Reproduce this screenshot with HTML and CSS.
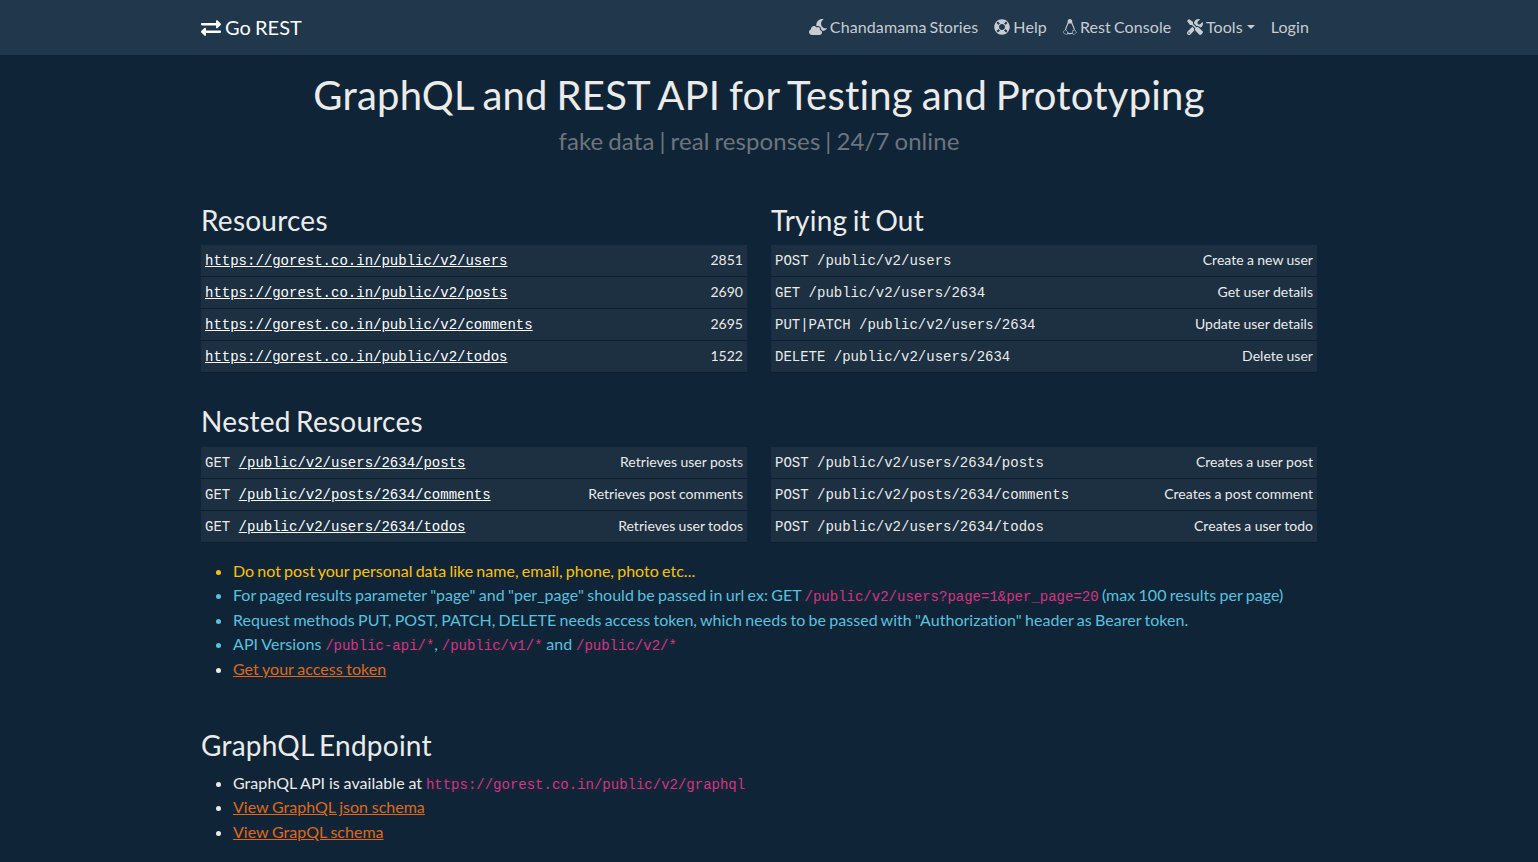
FILE: index.html
```html
<!DOCTYPE html>
<html lang="en">
<head>
<meta charset="utf-8">
<title>Go REST</title>
<link rel="stylesheet" href="styles.css">
</head>
<body>
<nav class="navbar">
  <div class="container navbar-inner">
    <a class="brand" href="#"><svg class="icon" viewBox="0 0 512 512"><path d="M0 168v-16c0-13.255 10.745-24 24-24h360V80c0-21.367 25.899-32.042 40.971-16.971l80 80c9.372 9.373 9.372 24.569 0 33.941l-80 80C409.956 271.982 384 261.456 384 240v-48H24c-13.255 0-24-10.745-24-24zm488 152H128v-48c0-21.314-25.862-32.08-40.971-16.971l-80 80c-9.372 9.373-9.372 24.569 0 33.941l80 80C102.057 463.997 128 453.437 128 432v-48h360c13.255 0 24-10.745 24-24v-16c0-13.255-10.745-24-24-24z"/></svg> Go REST</a>
    <div class="nav">
      <a class="nav-link" href="#"><svg class="icon icon-wide" viewBox="0 0 576 512"><path d="M342.8 352.7c5.7-9.6 9.2-20.7 9.2-32.7 0-35.3-28.7-64-64-64-17.2 0-32.8 6.9-44.3 17.9-16.3-29.6-47.5-49.9-83.7-49.9-53 0-96 43-96 96 0 2 .5 3.8.6 5.7C27.1 338.8 0 374.1 0 416c0 53 43 96 96 96h240c44.2 0 80-35.8 80-80 0-41.9-32.3-75.8-73.2-79.3zm222.5-54.3c-93.1 17.7-178.5-53.7-178.5-147.7 0-54.2 29-104 76.1-130.8 7.3-4.1 5.4-15.1-2.8-16.7C448.4 1.1 436.7 0 425 0 319.1 0 233.1 85.9 233.1 191.9c0 8.5.7 16.8 1.8 25 5.9 4.3 11.6 8.9 16.7 14.2 11.4-4.7 23.7-7.2 36.4-7.2 52.9 0 96 43.1 96 96 0 3.6-.2 7.2-.6 10.7 23.6 10.8 42.4 29.5 53.5 52.6 54.4-3.4 103.7-29.3 137.1-70.4 5.3-6.5-.5-16.1-8.7-14.4z"/></svg> Chandamama Stories</a>
      <a class="nav-link" href="#"><svg class="icon" viewBox="0 0 512 512"><path d="M256 8C119.033 8 8 119.033 8 256s111.033 248 248 248 248-111.033 248-248S392.967 8 256 8zm173.696 119.559l-63.399 63.399c-10.987-18.559-26.67-34.252-45.255-45.255l63.399-63.399a218.396 218.396 0 0 1 45.255 45.255zM256 352c-53.019 0-96-42.981-96-96s42.981-96 96-96 96 42.981 96 96-42.981 96-96 96zM127.559 82.304l63.399 63.399c-18.559 10.987-34.252 26.67-45.255 45.255l-63.399-63.399a218.372 218.372 0 0 1 45.255-45.255zM82.304 384.441l63.399-63.399c10.987 18.559 26.67 34.252 45.255 45.255l-63.399 63.399a218.396 218.396 0 0 1-45.255-45.255zm302.137 45.255l-63.399-63.399c18.559-10.987 34.252-26.67 45.255-45.255l63.399 63.399a218.403 218.403 0 0 1-45.255 45.255z"/></svg> Help</a>
      <a class="nav-link" href="#"><svg class="icon icon-linux" viewBox="0 0 14 16"><path d="M4.600 5V2.700C4.600 1 5.500.1 6.900.1S9.300 1 9.300 2.700V5L8.600 4.400H5.300z"/><path class="tux-side" d="M4.900 4.300C4.700 6 3.200 7.500 2.800 9.600L2.500 11M9 4.300C9.300 6 11 7.700 11.300 10.700M4.400 14.100C5.800 14.700 8 14.700 9.500 13.900"/><path class="tux-line" d="M.6 12.200C1.500 11.900 2.100 10.700 2.900 10.900 3.800 11.300 4.200 12.900 4.900 13.900 4.900 15.800 3.700 15.700 2.700 15 .9 14.600.3 14.500.6 12.200zM10 11C9.700 12.500 9.100 15.200 10.300 15.500 11.500 15.700 11.700 14.500 13.500 13.500 12.500 12.800 13 11.500 11.900 10.900 11 11.900 10.300 11.900 10 11z"/></svg> Rest Console</a>
      <a class="nav-link caret" href="#"><svg class="icon" viewBox="0 0 512 512"><path d="M501.1 395.7L384 278.6c-23.1-23.1-57.6-27.6-85.4-13.9L192 158.1V96L64 0 0 64l96 128h62.1l106.6 106.6c-13.6 27.8-9.2 62.3 13.9 85.4l117.1 117.1c14.6 14.6 38.2 14.6 52.7 0l52.7-52.7c14.5-14.6 14.5-38.2 0-52.7zM331.7 225c28.3 0 54.9 11 74.9 31l19.4 19.4c15.8-6.9 30.8-16.5 43.8-29.5 37.1-37.1 49.7-89.3 37.9-136.7-2.2-9-13.5-12.1-20.1-5.5l-74.4 74.4-67.9-11.3L334 98.9l74.4-74.4c6.6-6.6 3.4-17.9-5.7-20.2-47.4-11.7-99.6.9-136.6 37.9-28.5 28.5-41.9 66.1-41.2 103.6l82.1 82.1c8.1-1.9 16.5-2.9 24.7-2.9zm-103.900 82l-56.700-56.700L18.700 402.800c-25 25-25 65.500 0 90.500s65.500 25 90.500 0l123.600-123.600c-7.600-19.900-9.900-41.600-5-62.700zM64 472c-13.200 0-24-10.800-24-24 0-13.300 10.700-24 24-24s24 10.700 24 24c0 13.200-10.700 24-24 24z"/></svg> Tools</a>
      <a class="nav-link" href="#">Login</a>
    </div>
  </div>
</nav>
<main class="container">
  <header class="hero">
    <h1>GraphQL and REST API for Testing and Prototyping</h1>
    <p class="tagline">fake data | real responses | 24/7 online</p>
  </header>
  <section class="columns">
    <div>
      <h3>Resources</h3>
      <table>
        <tr><td><a href="#">https://gorest.co.in/public/v2/users</a></td><td>2851</td></tr>
        <tr><td><a href="#">https://gorest.co.in/public/v2/posts</a></td><td>2690</td></tr>
        <tr><td><a href="#">https://gorest.co.in/public/v2/comments</a></td><td>2695</td></tr>
        <tr><td><a href="#">https://gorest.co.in/public/v2/todos</a></td><td>1522</td></tr>
      </table>
    </div>
    <div>
      <h3>Trying it Out</h3>
      <table>
        <tr><td>POST /public/v2/users</td><td>Create a new user</td></tr>
        <tr><td>GET /public/v2/users/2634</td><td>Get user details</td></tr>
        <tr><td>PUT|PATCH /public/v2/users/2634</td><td>Update user details</td></tr>
        <tr><td>DELETE /public/v2/users/2634</td><td>Delete user</td></tr>
      </table>
    </div>
  </section>
  <section class="nested">
    <h3>Nested Resources</h3>
    <div class="columns">
      <table>
        <tr><td>GET <a href="#">/public/v2/users/2634/posts</a></td><td>Retrieves user posts</td></tr>
        <tr><td>GET <a href="#">/public/v2/posts/2634/comments</a></td><td>Retrieves post comments</td></tr>
        <tr><td>GET <a href="#">/public/v2/users/2634/todos</a></td><td>Retrieves user todos</td></tr>
      </table>
      <table>
        <tr><td>POST /public/v2/users/2634/posts</td><td>Creates a user post</td></tr>
        <tr><td>POST /public/v2/posts/2634/comments</td><td>Creates a post comment</td></tr>
        <tr><td>POST /public/v2/users/2634/todos</td><td>Creates a user todo</td></tr>
      </table>
    </div>
  </section>
  <ul class="notes">
    <li class="warning">Do not post your personal data like name, email, phone, photo etc...</li>
    <li class="info">For paged results parameter "page" and "per_page" should be passed in url ex: GET <code>/public/v2/users?page=1&amp;per_page=20</code> (max 100 results per page)</li>
    <li class="info">Request methods PUT, POST, PATCH, DELETE needs access token, which needs to be passed with "Authorization" header as Bearer token.</li>
    <li class="info versions">API Versions <code>/public-api/*</code>, <code>/public/v1/*</code> and <code>/public/v2/*</code></li>
    <li><a href="#">Get your access token</a></li>
  </ul>
  <section>
    <h3>GraphQL Endpoint</h3>
    <ul>
      <li class="endpoint">GraphQL API is available at <code>https://gorest.co.in/public/v2/graphql</code></li>
      <li><a href="#">View GraphQL json schema</a></li>
      <li><a href="#">View GrapQL schema</a></li>
    </ul>
  </section>
</main>
</body>
</html>
```
FILE: styles.css
```css
* { box-sizing: border-box; }
html { overflow: hidden; background: #0f2537; }
body {
  margin: 0;
  font: 400 16px/1.5 Lato, sans-serif;
  font-variant-ligatures: none;
  color: #ebebeb;
  background: #0f2537;
}
.navbar { background: #20374c; padding: 8px 20px 8px 0; height: 55px; }
.container { width: 1140px; margin: 0 auto; padding: 0 12px; }
main.container { position: relative; left: -10px; }
.navbar-inner { display: flex; align-items: center; justify-content: space-between; }
.brand { font-size: 20px; line-height: 30px; color: #fff; text-decoration: none; white-space: nowrap; word-spacing: -1px; }
.nav { display: flex; word-spacing: -1.2px; letter-spacing: .1px; }
.nav-link { padding: 8px; line-height: 24px; color: rgba(255, 255, 255, .75); text-decoration: none; white-space: nowrap; margin: -1px 0; }
.icon { width: 1em; height: 1em; fill: currentColor; vertical-align: -.125em; overflow: visible; }
.icon-wide { width: 1.125em; }
.icon-linux { width: .875em; }
.tux-side { fill: none; stroke: currentColor; stroke-width: 1.1; }
.tux-line { fill: none; stroke: currentColor; stroke-width: .6; }
.caret::after {
  content: "";
  display: inline-block;
  margin-left: 4px;
  vertical-align: 4px;
  border-top: 4.8px solid;
  border-left: 4.8px solid transparent;
  border-right: 4.8px solid transparent;
}
h1, h3, p, ul { margin: 0; font-weight: 400; }
.hero { padding-top: 16px; text-align: center; }
h1 { font-size: 40px; line-height: 48px; margin-bottom: 8px; word-spacing: -1.6px; letter-spacing: .22px; }
.tagline { font-size: 24px; line-height: 28px; color: #6c757d; margin-bottom: 49px; word-spacing: -1.2px; letter-spacing: .08px; }
h3 { font-size: 28px; line-height: 33.6px; margin-bottom: 8px; word-spacing: -2px; letter-spacing: .23px; }
.columns { display: grid; grid-template-columns: 1fr 1fr; gap: 24px; }
.columns h3 { margin-bottom: 7.4px; }
table { width: 100%; border-collapse: collapse; font-size: 14px; line-height: 21px; }
td { background: #1c3041; border-bottom: 1px solid #0e1e2c; }
td:first-child { padding: 6px 4px 4px; font-family: "Liberation Mono", monospace; }
td:last-child { padding: 4px 4px 6px; text-align: right; word-spacing: -.3px; letter-spacing: .03px; }
td a { color: #fff; }
.nested { margin-top: 32px; }
ul { padding-left: 32px; }
li { line-height: 24.5px; word-spacing: -.35px; }
a { color: #df6919; }
code { font: 14px "Liberation Mono", monospace; letter-spacing: 0; color: #d63384; }
.notes { margin: 16px 0 48.2px; }
.warning { color: #ffc107; word-spacing: -1px; letter-spacing: .03px; }
.info { color: #5bc0de; word-spacing: -.8px; letter-spacing: .02px; }
.versions { word-spacing: -.5px; letter-spacing: .08px; }
.endpoint { letter-spacing: .05px; }
```
